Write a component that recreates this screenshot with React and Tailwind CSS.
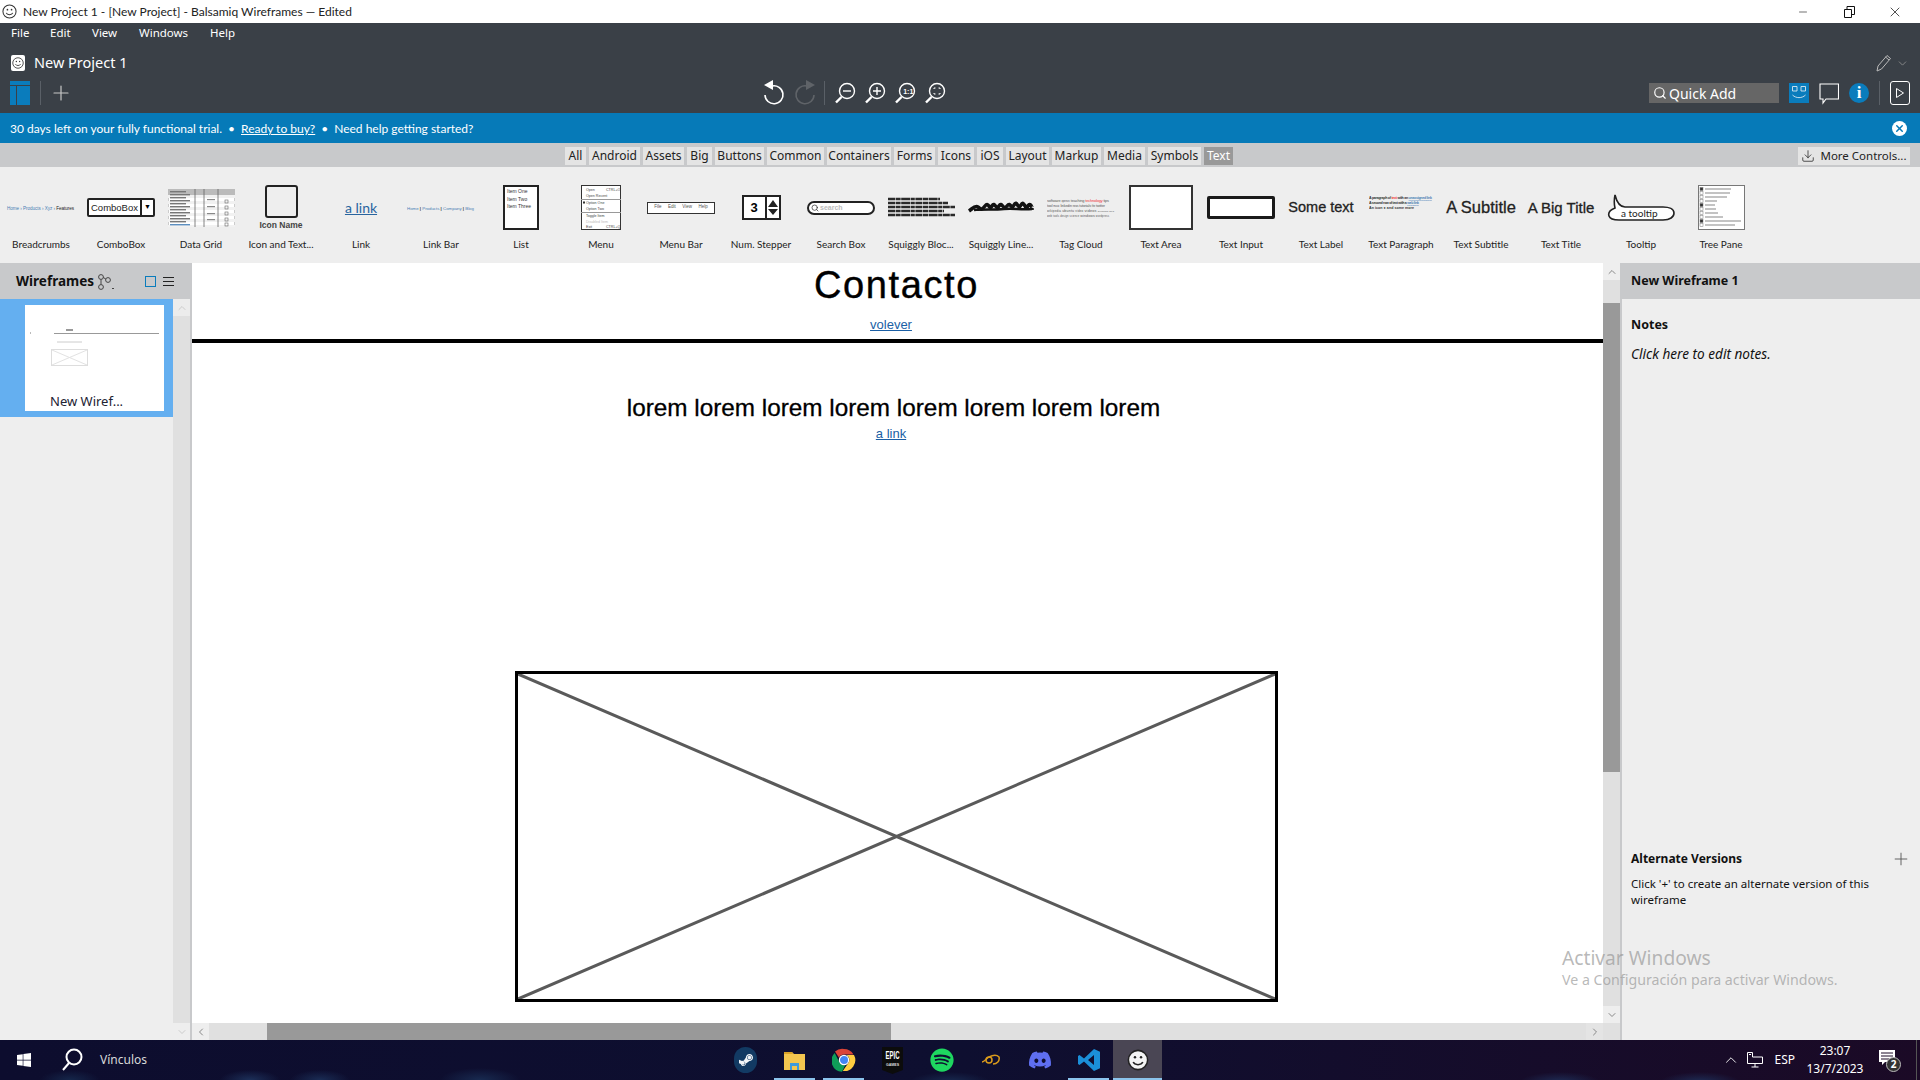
import React from 'react'
import { FaWindows, FaSpotify, FaDiscord, FaSteamSymbol } from 'react-icons/fa'
import { Search, ChevronUp, ChevronDown, ChevronLeft, ChevronRight, Plus, X, Minus, Download } from 'lucide-react'

const tabs = [
    { name: 'All', w: 'w-[21px]' },
    { name: 'Android', w: 'w-[51px]' },
    { name: 'Assets', w: 'w-[41px]' },
    { name: 'Big', w: 'w-[25px]' },
    { name: 'Buttons', w: 'w-[49px]' },
    { name: 'Common', w: 'w-[57px]' },
    { name: 'Containers', w: 'w-[64px]' },
    { name: 'Forms', w: 'w-[41px]' },
    { name: 'Icons', w: 'w-[36px]' },
    { name: 'iOS', w: 'w-[26px]' },
    { name: 'Layout', w: 'w-[43px]' },
    { name: 'Markup', w: 'w-[49px]' },
    { name: 'Media', w: 'w-[41px]' },
    { name: 'Symbols', w: 'w-[53px]' },
]

const Mini = ({ w, h, children }) => (
    <svg width={w} height={h} viewBox={`0 0 ${w} ${h}`} fontFamily="Liberation Sans, sans-serif">{children}</svg>
)

const Breadcrumbs = () => (
    <Mini w={70} h={10}>
        <text x="1" y="7" fontSize="4.6" fill="#4a7fb5" textLength="67">Home › Products › Xyz › <tspan fill="#222">Features</tspan></text>
    </Mini>
)

const ComboThumb = () => (
    <div className="w-[68px] h-[19px] border-2 border-[#222] rounded-[2px] bg-white flex items-center">
        <span className="flex-1 text-[9.5px] text-center font-['Liberation_Sans',sans-serif] text-[#222] leading-none">ComboBox</span>
        <span className="w-[13px] h-full border-l-2 border-[#222] flex items-center justify-center text-[7px] text-black">▼</span>
    </div>
)

const DataGrid = () => (
    <Mini w={67} h={38}>
        <rect x="0" y="0" width="67" height="38" fill="#fff" stroke="#999" />
        <rect x="0" y="0" width="67" height="6" fill="#bbb" />
        {[0, 6, 12, 18, 24, 30].map((y) => (
            <rect key={y} x="0" y={y + 6} width="67" height="3" fill="#f1f1f1" />
        ))}
        {[2, 5, 8, 11, 14, 17, 20, 23, 26, 29, 32].map((y) => (
            <rect key={y} x="2" y={y} width={y % 2 ? 20 : 16} height="1.4" fill="#777" />
        ))}
        <rect x="2" y="35" width="20" height="1.4" fill="#5c8fc0" />
        <path d="M27 0V38M36 0V38M50 0V38" stroke="#666" strokeWidth="0.8" />
        {[12, 18, 24, 30, 35].map((y) => (
            <rect key={y} x="57" y={y - 1} width="3" height="3" fill="none" stroke="#666" strokeWidth="0.6" />
        ))}
        {[10, 17, 24, 30].map((y) => (
            <rect key={y} x="39" y={y} width="8" height="1.2" fill="#888" />
        ))}
    </Mini>
)

const IconText = () => (
    <div className="flex flex-col items-center">
        <div className="w-[33px] h-[33px] mt-[1px] border-2 border-[#222] rounded-[3px] bg-[#eeeeee]" />
        <span className="text-[8.5px] leading-[12px] mt-[1px] font-bold text-[#444] font-['Liberation_Sans',sans-serif]">Icon Name</span>
    </div>
)

const LinkThumb = () => (
    <span className="text-[14px] leading-[16px] text-[#29649e] underline font-['Lato',sans-serif]">a link</span>
)

const LinkBar = () => (
    <Mini w={68} h={10}>
        <text x="0" y="7" fontSize="4.4" fill="#4a7fb5" textLength="67">Home <tspan fill="#333" fontWeight="bold">|</tspan> Products <tspan fill="#333" fontWeight="bold">|</tspan> Company <tspan fill="#333" fontWeight="bold">|</tspan> Blog</text>
    </Mini>
)

const ListThumb = () => (
    <div className="w-[36px] h-[45px] border-2 border-[#222] bg-white pl-[2px] pt-[1px] font-['Liberation_Sans',sans-serif] text-[5px] leading-[7.5px] text-[#333]">
        <div>Item One</div>
        <div>Item Two</div>
        <div>Item Three</div>
    </div>
)

const MenuThumb = () => (
    <Mini w={40} h={45}>
        <rect x="0.5" y="0.5" width="39" height="44" fill="#fff" stroke="#333" />
        <g fontSize="3.6" fill="#444">
            <text x="5" y="6">Open</text>
            <text x="25" y="6">CTRL+O</text>
            <text x="5" y="12">Open Recent</text>
            <text x="5" y="19">Option One</text>
            <text x="5" y="25">Option Two</text>
            <text x="5" y="32">Toggle Item</text>
            <text x="5" y="38" fill="#bbb">Disabled Item</text>
            <text x="5" y="43">Exit</text>
            <text x="25" y="43">CTRL+Q</text>
        </g>
        <path d="M0 14.5H40M0 27.5H40" stroke="#999" />
        <rect x="2" y="16.5" width="2" height="2" fill="#333" />
    </Mini>
)

const MenuBar = () => (
    <div className="w-[68px] h-[12px] border border-[#333] bg-white flex items-center justify-around px-[3px] text-[4.5px] text-[#555] font-['Liberation_Sans',sans-serif]">
        <span>File</span><span>Edit</span><span>View</span><span>Help</span>
    </div>
)

const Stepper = () => (
    <div className="w-[39px] h-[25px] border-2 border-[#222] bg-white flex items-center">
        <span className="w-[22px] text-center text-[13px] font-bold text-black font-['Liberation_Sans',sans-serif] leading-none">3</span>
        <span className="flex-1 h-full border-l-2 border-[#222] flex items-center justify-center">
            <svg width="12" height="17" viewBox="0 0 12 17"><path d="M6 1L11 8H1ZM1 10H11L6 16Z" fill="#222" /></svg>
        </span>
    </div>
)

const SearchThumb = () => (
    <div className="w-[68px] h-[14px] border-2 border-[#222] rounded-full bg-white flex items-center pl-[2px] gap-[1px]">
        <Search size={8} strokeWidth={2.2} color="#333" />
        <span className="text-[7px] leading-none text-[#bbb] font-bold font-['Liberation_Sans',sans-serif]">search</span>
    </div>
)

const SquigglyBlock = () => (
    <Mini w={67} h={21}>
        {[2, 6, 10, 14, 18].map((y, i) => (
            <path key={y} d={`M0 ${y}H${[52, 60, 67, 56, 67][i]}`} stroke="#2a2a2a" strokeWidth="2.4" strokeDasharray="7 0.6 5 0.6 9 0.6 4 0.6" />
        ))}
    </Mini>
)

const SquigglyLine = () => (
    <Mini w={66} h={14}>
        <path d="M1 10C4 8 7 4 10 6S13 10 17 5 21 10 24 5 28 10 31 5 35 10 39 5 43 10 46 4 50 10 53 4 57 10 60 5 64 9 65 7" fill="none" stroke="#111" strokeWidth="3.6" />
        <path d="M6 9C16 8 26 9 36 8S52 9 64 8" fill="none" stroke="#111" strokeWidth="2.4" />
    </Mini>
)

const TagCloud = () => (
    <Mini w={68} h={20}>
        <g fill="#555">
            <text x="0" y="4" fontSize="3.8" textLength="62">software <tspan fontSize="2.6">opensrc</tspan> teaching <tspan fill="#e33">technology</tspan> tips</text>
            <text x="0" y="9" fontSize="3.6" textLength="58">tool <tspan fontSize="2.6">music</tspan> linkedin <tspan fontSize="2.6">news</tspan> tutorials <tspan fontSize="2.6">the</tspan> twitter</text>
            <text x="0" y="14" fontSize="3" textLength="67">wikipedia <tspan fontSize="3.6">ubuntu</tspan> video <tspan fontSize="3.8">videos</tspan> <tspan fontSize="2.4">windows web</tspan></text>
            <text x="0" y="19" fontSize="2.6" textLength="62">web tools design science <tspan fontSize="3.6">windows</tspan> wordpress</text>
        </g>
    </Mini>
)

const TextArea = () => <div className="w-[64px] h-[45px] border-2 border-[#333] bg-white" />

const TextInput = () => <div className="w-[68px] h-[23px] border-[3px] border-[#1a1a1a] rounded-[2px] bg-white" />

const SomeText = () => (
    <span className="text-[14.5px] leading-none text-[#222] whitespace-nowrap [-webkit-text-stroke:0.3px_#222] font-['Liberation_Sans',sans-serif]">Some text</span>
)

const Paragraph = () => (
    <div className="-mt-[9px] flex">
        <Mini w={64} h={16}>
            <g fontSize="3.6" fill="#333" fontWeight="bold">
                <text x="0" y="4" textLength="63">A paragraph of <tspan fill="#e33">text</tspan> with an <tspan fill="#4a7fb5" textDecoration="underline">unassigned link</tspan></text>
                <text x="0" y="9" textLength="50">A second row of text with a <tspan fill="#4a7fb5" textDecoration="underline">web link</tspan></text>
                <text x="0" y="14" textLength="45">An icon ● and some more</text>
            </g>
        </Mini>
    </div>
)

const Subtitle = () => (
    <span className="text-[16.5px] leading-none text-[#222] whitespace-nowrap [-webkit-text-stroke:0.3px_#222] font-['Liberation_Sans',sans-serif]">A Subtitle</span>
)

const BigTitle = () => (
    <span className="text-[15px] leading-none text-[#222] whitespace-nowrap [-webkit-text-stroke:0.3px_#222] font-['Liberation_Sans',sans-serif]">A Big Title</span>
)

const TooltipThumb = () => (
    <Mini w={68} h={27}>
        <path d="M8 14C3 16 1 19 2 22 3 25 7 26 12 26H56C63 26 67 23 67 19 67 15 62 13 56 13H18C14 13 10 9 8 1 7 6 7 10 8 14Z" fill="#fff" stroke="#222" strokeWidth="1.6" />
        <text x="14" y="22.5" fontSize="10" fill="#222" fontFamily="Lato, sans-serif">a tooltip</text>
    </Mini>
)

const TreePane = () => (
    <Mini w={47} h={45}>
        <rect x="0.5" y="0.5" width="46" height="44" fill="#fff" stroke="#777" />
        {[4, 8, 12, 16, 20, 24, 28, 32, 36, 40].map((y, i) => (
            <g key={y}>
                <rect x="2" y={y - 1.5} width="3" height="3" fill={i % 4 === 0 ? '#333' : 'none'} stroke="#777" strokeWidth="0.5" />
                <rect x="7" y={y - 0.5} width={[26, 25, 22, 12, 10, 11, 13, 18, 36, 30][i]} height="1" fill="#888" />
            </g>
        ))}
    </Mini>
)

const library = [
    { label: 'Breadcrumbs', thumb: <Breadcrumbs /> },
    { label: 'ComboBox', thumb: <ComboThumb /> },
    { label: 'Data Grid', thumb: <DataGrid /> },
    { label: 'Icon and Text...', thumb: <IconText /> },
    { label: 'Link', thumb: <LinkThumb /> },
    { label: 'Link Bar', thumb: <LinkBar /> },
    { label: 'List', thumb: <ListThumb /> },
    { label: 'Menu', thumb: <MenuThumb /> },
    { label: 'Menu Bar', thumb: <MenuBar /> },
    { label: 'Num. Stepper', thumb: <Stepper /> },
    { label: 'Search Box', thumb: <SearchThumb /> },
    { label: 'Squiggly Bloc...', thumb: <SquigglyBlock /> },
    { label: 'Squiggly Line...', thumb: <SquigglyLine /> },
    { label: 'Tag Cloud', thumb: <TagCloud /> },
    { label: 'Text Area', thumb: <TextArea /> },
    { label: 'Text Input', thumb: <TextInput /> },
    { label: 'Text Label', thumb: <SomeText /> },
    { label: 'Text Paragraph', thumb: <Paragraph /> },
    { label: 'Text Subtitle', thumb: <Subtitle /> },
    { label: 'Text Title', thumb: <BigTitle /> },
    { label: 'Tooltip', thumb: <TooltipThumb /> },
    { label: 'Tree Pane', thumb: <TreePane /> },
]

const Smiley = ({ size = 16, stroke = '#333', fill = 'none' }) => (
    <svg width={size} height={size} viewBox="0 0 16 16" fill="none">
        <circle cx="8" cy="8" r="7" stroke={stroke} strokeWidth="1.1" fill={fill} />
        <circle cx="5.8" cy="6" r="0.9" fill={stroke} />
        <circle cx="10.2" cy="6" r="0.9" fill={stroke} />
        <path d="M4.5 9.5C5.5 12 10.5 12 11.5 9.5" stroke={stroke} strokeWidth="1.1" />
    </svg>
)

const Zoom = ({ children }) => (
    <svg width="22" height="22" viewBox="0 0 22 22" fill="none" stroke="#fff" strokeWidth="1.4">
        <circle cx="13" cy="9" r="7.5" />
        <path d="M7.5 15L2 20.5" strokeWidth="2.4" />
        {children}
    </svg>
)

const ChromeIcon = () => (
    <svg width="24" height="24" viewBox="0 0 24 24">
        <path d="M12 1a11 11 0 0 1 9.5 5.5H12a5.5 5.5 0 0 0-5 3.2L3 3.6A11 11 0 0 1 12 1Z" fill="#db4437" />
        <path d="M2.7 5L7.3 14a5.5 5.5 0 0 0 6 3l-3.3 6.8A11 11 0 0 1 2.7 5Z" fill="#0f9d58" />
        <path d="M22 7H14.5a5.5 5.5 0 0 1 1.8 8L10.8 23A11 11 0 0 0 22 7Z" fill="#ffcd40" />
        <circle cx="12" cy="12" r="4.6" fill="#4285f4" stroke="#fff" strokeWidth="1.2" />
    </svg>
)

const FolderIcon = () => (
    <svg width="23" height="23" viewBox="0 0 23 23">
        <path d="M1 3H9L11 5H22V21H1Z" fill="#f3c64f" />
        <path d="M1 3H9L10 5H1Z" fill="#d9a227" />
        <path d="M7 14H16V21H14V17H9V21H7Z" fill="#3f9bdc" />
    </svg>
)

const VscodeIcon = () => (
    <svg width="24" height="24" viewBox="0 0 24 24">
        <path d="M17 1L23 3.8V20.2L17 23L7 13.5L2.5 17L1 16V8L2.5 7L7 10.5ZM17 7L11 12L17 17Z" fill="#1b8fd8" />
    </svg>
)

const HornIcon = () => (
    <svg width="20" height="12" viewBox="0 0 20 12" fill="none" stroke="#d99a1c" strokeWidth="1.5">
        <circle cx="8" cy="6" r="3" />
        <path d="M1 8C3 8 5 5 8 3 12 1 16 1 18 3 19 7 16 10 12 10" />
    </svg>
)

const EpicIcon = () => (
    <svg width="21" height="29" viewBox="0 0 21 29">
        <path d="M0 1H21V24L10.5 28L0 24Z" fill="#0c0c0c" />
        <text transform="translate(10.5 13) scale(1 1.7)" fontSize="6" fontWeight="bold" fill="#fff" textAnchor="middle" fontFamily="Liberation Sans, sans-serif">EPIC</text>
        <text x="10.5" y="20" fontSize="3.6" fontWeight="bold" fill="#ddd" textAnchor="middle" fontFamily="Liberation Sans, sans-serif">GAMES</text>
    </svg>
)

const SteamIcon = () => (
    <span className="w-[23px] h-[26px] rounded-full bg-[#123a63] flex items-center justify-center">
        <FaSteamSymbol size={16} color="#f2f5f8" />
    </span>
)

const taskIcons = [
    { el: <SteamIcon />, bar: null },
    { el: <FolderIcon />, bar: 'one' },
    { el: <ChromeIcon />, bar: 'one' },
    { el: <EpicIcon />, bar: null },
    { el: <FaSpotify size={24} color="#1ed760" />, bar: null },
    { el: <HornIcon />, bar: null },
    { el: <FaDiscord size={24} color="#5f6ff0" />, bar: null },
    { el: <VscodeIcon />, bar: 'one' },
    { el: <Smiley size={22} stroke="#222" fill="#f4f4f4" />, bar: 'active' },
]

export default function App() {
    return (
        <div className="relative w-[1920px] h-[1080px] flex flex-col overflow-hidden bg-white font-['Noto_Sans',sans-serif]">
            {/* title bar */}
            <div className="h-[23px] flex items-center bg-white shrink-0">
                <span className="ml-[2px] mr-[6px] flex"><Smiley size={15} /></span>
                <span className="text-[12px] text-[#222] font-['Lato',sans-serif]">New Project 1 - [New Project] - Balsamiq Wireframes — Edited</span>
                <div className="ml-auto mr-[2px] flex items-center">
                    <span className="w-[46px] flex justify-center"><Minus size={12} strokeWidth={1.2} color="#111" /></span>
                    <span className="w-[46px] flex justify-center">
                        <svg width="11" height="12" viewBox="0 0 11 12" fill="none" stroke="#111"><path d="M0.5 3.5H7.5V11.5H0.5ZM3 3V0.5H10.5V8.5H8" /></svg>
                    </span>
                    <span className="w-[46px] flex justify-center"><X size={16} strokeWidth={1.1} color="#111" /></span>
                </div>
            </div>

            {/* dark app header */}
            <div className="h-[90px] bg-[#3a4047] shrink-0 flex flex-col text-white">
                <div className="h-[20px] flex items-center pl-[11px] text-[11.5px]">
                    <span className="w-[39px]">File</span>
                    <span className="w-[42px]">Edit</span>
                    <span className="w-[47px]">View</span>
                    <span className="w-[71px]">Windows</span>
                    <span>Help</span>
                </div>
                <div className="h-[40px] flex items-center pl-[11px] pr-[11px]">
                    <span className="mr-[9px] w-[14px] h-[16px] bg-white rounded-[2px] flex items-center justify-center"><Smiley size={12} /></span>
                    <span className="text-[14.5px]">New Project 1</span>
                    <span className="ml-auto flex items-center gap-[4px]">
                        <svg width="16" height="18" viewBox="0 0 16 18" fill="none" stroke="#bbb"><path d="M1 17L2 12L11 1.5L14.5 4.5L5.5 15ZM9.5 3L13 6" /></svg>
                        <ChevronDown size={13} color="#999" strokeWidth={1.4} />
                    </span>
                </div>
                <div className="h-[20px] flex items-center pl-[10px] pr-[10px]">
                    <svg width="20" height="24" viewBox="0 0 20 24"><path d="M0 0H20V4H0ZM0 5H6V24H0ZM7 5H20V24H7Z" fill="#0a7cbc" /></svg>
                    <span className="w-px h-[24px] bg-[#5a6067] ml-[10px]" />
                    <span className="ml-[8px]"><Plus size={24} strokeWidth={1.2} color="#c8c8c8" /></span>
                    <div className="ml-[690px] flex items-center">
                        <svg width="22" height="26" viewBox="0 0 22 26" fill="none" stroke="#fff" strokeWidth="1.6"><path d="M9 6A9 9 0 1 1 2 15" /><path d="M1 5L10 0V10Z" fill="#fff" stroke="none" /></svg>
                        <svg className="ml-[9px]" width="22" height="26" viewBox="0 0 22 26" fill="none" stroke="#5f6368" strokeWidth="1.6"><path d="M13 6A9 9 0 1 0 20 15" /><path d="M21 5L12 0V10Z" fill="#5f6368" stroke="none" /></svg>
                        <span className="w-px h-[24px] bg-[#5a6067] ml-[8px] mr-[9px]" />
                        <Zoom><path d="M9 9H17" /></Zoom>
                        <span className="ml-[8px] flex"><Zoom><path d="M9 9H17M13 5V13" /></Zoom></span>
                        <span className="ml-[8px] flex"><Zoom><text x="9.2" y="11.5" fontSize="7" fill="#fff" stroke="none" fontWeight="bold" fontFamily="Liberation Sans, sans-serif">1:1</text></Zoom></span>
                        <span className="ml-[8px] flex"><Zoom><path d="M10 7V6H11.5M14.5 6H16V7M16 11V12H14.5M11.5 12H10V11" strokeWidth="1" /></Zoom></span>
                    </div>
                    <div className="ml-auto flex items-center">
                        <div className="w-[130px] h-[20px] bg-[#666666] flex items-center pl-[4px] gap-[2px] text-[14px]">
                            <Search size={14} strokeWidth={2} color="#fff" />
                            <span>Quick Add</span>
                        </div>
                        <span className="ml-[10px] w-[20px] h-[20px] bg-[#0a7cbc] flex items-center justify-center">
                            <svg width="16" height="16" viewBox="0 0 16 16" fill="none" stroke="#d8e8f0" strokeWidth="0.9"><path d="M1.5 1.5H6V6H1.5ZM10 1.5H14.5V6H10ZM1.5 10C5 13.5 11 13.5 14.5 10" /></svg>
                        </span>
                        <span className="ml-[10px] flex">
                            <svg width="20" height="24" viewBox="0 0 20 24" fill="none" stroke="#fff" strokeWidth="1.1"><path d="M1 3H19.5V18H7L4 22V18H1Z" /></svg>
                        </span>
                        <span className="ml-[10px] w-[20px] h-[20px] rounded-full bg-[#0a7cbc] flex items-center justify-center text-[17px] font-bold text-white font-['Liberation_Serif',serif]">i</span>
                        <span className="w-px h-[24px] bg-[#5a6067] ml-[10px] mr-[10px]" />
                        <span className="w-[20px] h-[24px] border border-white rounded-[3px] flex items-center justify-center">
                            <svg width="10" height="12" viewBox="0 0 10 12" fill="none" stroke="#fff"><path d="M1.5 1.5L8.5 6L1.5 10.5Z" /></svg>
                        </span>
                    </div>
                </div>
            </div>

            {/* trial notice */}
            <div className="h-[30px] bg-[#067ab8] shrink-0 flex items-center pt-[1px] pl-[10px] pr-[13px] text-white text-[12px] font-['Lato',sans-serif]">
                <span>30 days left on your fully functional trial.</span>
                <span className="mx-[6px]">•</span>
                <span className="underline">Ready to buy?</span>
                <span className="mx-[6px]">•</span>
                <span>Need help getting started?</span>
                <span className="ml-auto w-[15px] h-[15px] rounded-full bg-white flex items-center justify-center">
                    <X size={11} strokeWidth={3.2} color="#067ab8" />
                </span>
            </div>

            {/* category tabs */}
            <div className="h-[24px] bg-[#c8c9cb] shrink-0 flex items-center pt-[1px] text-[12px] text-[#222]">
                <div className="w-[1798px] flex justify-center gap-[3px]">
                    {tabs.map((t) => (
                        <span key={t.name} className={t.w + ' h-[18px] bg-[#e4e4e4] flex items-center justify-center whitespace-nowrap'}>{t.name}</span>
                    ))}
                    <span className="w-[29px] h-[18px] bg-[#999999] text-white flex items-center justify-center">Text</span>
                </div>
                <div className="w-[112px] h-[18px] bg-[#e4e4e4] text-[11.5px] flex items-center justify-center gap-[5px] whitespace-nowrap">
                    <Download size={14} strokeWidth={1.3} color="#222" />
                    <span>More Controls...</span>
                </div>
            </div>

            {/* library strip */}
            <div className="h-[96px] bg-[#eeeeee] shrink-0 flex pl-[1px]">
                {library.map((item) => (
                    <div key={item.label} className="w-[80px] shrink-0 flex flex-col items-center pt-[18px]">
                        <div className="h-[45px] flex items-center justify-center">{item.thumb}</div>
                        <div className="mt-[6px] text-[10px] leading-[16px] text-[#222] whitespace-nowrap font-['Lato',sans-serif]">{item.label}</div>
                    </div>
                ))}
            </div>

            {/* main */}
            <div className="flex-1 min-h-0 flex">
                {/* wireframes panel */}
                <div className="w-[192px] shrink-0 flex flex-col bg-[#eeeeee] border-r-2 border-[#c8c9cb]">
                    <div className="h-[36px] shrink-0 bg-[#c8c9cb] flex items-center pl-[16px] pt-[1px] text-[13.5px] font-bold text-[#111]">
                        <span>Wireframes</span>
                        <svg className="ml-[3px]" width="18" height="16" viewBox="0 0 18 16" fill="none" stroke="#444"><circle cx="4" cy="3" r="2.4" /><circle cx="11" cy="6" r="2.4" /><circle cx="4" cy="13" r="2.4" /><path d="M4 5.5V10.5M6.3 3.5L8.8 5M15 14L16 15L17 14" /></svg>
                        <span className="ml-[30px] w-[11px] h-[11px] border border-[#0a7cbc]" />
                        <span className="ml-[7px] flex flex-col gap-[3px]">
                            <span className="block w-[11px] h-px bg-[#222]" />
                            <span className="block w-[11px] h-px bg-[#222]" />
                            <span className="block w-[11px] h-px bg-[#222]" />
                        </span>
                    </div>
                    <div className="flex-1 min-h-0 flex">
                        <div className="w-[173px] shrink-0">
                            <div className="h-[118px] bg-[#64aff0] pl-[25px] pt-[6px]">
                                <div className="w-[139px] h-[106px] bg-white flex flex-col">
                                    <svg width="139" height="84" viewBox="0 0 139 84" fill="none">
                                        <path d="M5 28H6" stroke="#777" />
                                        <path d="M29 28.5H134" stroke="#999" />
                                        <path d="M41 25H48" stroke="#555" strokeWidth="1.2" />
                                        <path d="M32 37H57" stroke="#ccc" />
                                        <rect x="26.5" y="44.5" width="36" height="16" stroke="#ddd" />
                                        <path d="M27 45L62 60M62 45L27 60" stroke="#e2e2e2" />
                                    </svg>
                                    <span className="pl-[25px] mt-[4px] text-[13px] leading-[16px] text-[#223]">New Wiref...</span>
                                </div>
                            </div>
                        </div>
                        <div className="w-[17px] shrink-0 bg-[#e0e0e0] flex flex-col justify-between">
                            <span className="h-[17px] bg-[#ececec] flex items-center justify-center"><ChevronUp size={12} color="#ccc" /></span>
                            <span className="h-[17px] bg-[#eeeeee] flex items-center justify-center"><ChevronDown size={12} color="#ccc" /></span>
                        </div>
                    </div>
                </div>

                {/* canvas column */}
                <div className="w-[1411px] shrink-0 flex flex-col">
                    <div className="flex-1 min-h-0 bg-white flex flex-col items-center font-['Liberation_Sans',sans-serif]">
                        <div className="h-[39px] mt-[2px] text-[38px] leading-[40px] text-black tracking-[1.6px] [-webkit-text-stroke:0.4px_black] -ml-[2px]">Contacto</div>
                        <a className="mt-[13px] text-[13px] leading-[16px] text-[#1b5fa5] underline -ml-[13px]">volever</a>
                        <div className="w-full h-[4px] bg-black mt-[6px] shrink-0" />
                        <div className="mt-[50px] text-[24.3px] leading-[30px] text-black whitespace-nowrap [-webkit-text-stroke:0.3px_black] -ml-[8px]">lorem lorem lorem lorem lorem lorem lorem lorem</div>
                        <a className="mt-[3px] text-[13px] leading-[16px] text-[#1b5fa5] underline -ml-[13px]">a link</a>
                        <div className="mt-[229px] w-[763px] h-[331px] shrink-0 border-[3px] border-black -ml-[2px]">
                            <svg className="w-full h-full" viewBox="0 0 757 325" preserveAspectRatio="none" fill="none">
                                <path d="M0 0L757 325M757 0L0 325" stroke="#5a5a5a" strokeWidth="3" />
                            </svg>
                        </div>
                    </div>
                    <div className="h-[17px] shrink-0 bg-[#e0e0e0] flex items-center">
                        <span className="w-[17px] h-full bg-[#eeeeee] flex items-center justify-center"><ChevronLeft size={12} color="#888" /></span>
                        <span className="ml-[58px] w-[624px] h-full bg-[#999999]" />
                        <span className="ml-auto w-[17px] h-full bg-[#e4e4e4] flex items-center justify-center"><ChevronRight size={12} color="#888" /></span>
                    </div>
                </div>

                {/* canvas vertical scrollbar */}
                <div className="w-[17px] shrink-0 bg-[#e0e0e0] flex flex-col">
                    <span className="h-[17px] shrink-0 bg-[#eeeeee] flex items-center justify-center"><ChevronUp size={12} color="#888" /></span>
                    <span className="mt-[23px] h-[469px] shrink-0 bg-[#999999]" />
                    <span className="mt-auto h-[17px] shrink-0 bg-[#eeeeee] flex items-center justify-center"><ChevronDown size={12} color="#888" /></span>
                    <span className="h-[17px] shrink-0 bg-[#e0e0e0]" />
                </div>

                {/* properties panel */}
                <div className="flex-1 min-w-0 flex flex-col bg-[#eeeeee] border-l-2 border-[#c8c9cb] text-[#111]">
                    <div className="h-[36px] shrink-0 bg-[#c8c9cb] flex items-center pl-[9px] text-[12.5px] font-bold">New Wireframe 1</div>
                    <div className="pl-[9px] mt-[17px] text-[12.5px] leading-[18px] font-bold">Notes</div>
                    <div className="pl-[9px] mt-[11px] text-[13.6px] leading-[18px] italic">Click here to edit notes.</div>
                    <div className="mt-[486px] pl-[9px] pr-[9px] flex items-center justify-between text-[12px] leading-[18px] font-bold">
                        <span>Alternate Versions</span>
                        <Plus size={20} strokeWidth={1.1} color="#555" />
                    </div>
                    <div className="pl-[9px] pr-[30px] mt-[7px] text-[11.5px] leading-[16px]">Click '+' to create an alternate version of this wireframe</div>
                </div>
            </div>

            {/* taskbar */}
            <div className="h-[40px] shrink-0 flex items-center text-white bg-[radial-gradient(ellipse_30px_10px_at_250px_40px,#1c2f58,transparent),radial-gradient(ellipse_30px_10px_at_320px_40px,#1a2c54,transparent),radial-gradient(ellipse_30px_10px_at_70px_40px,#15264a,transparent),radial-gradient(ellipse_40px_12px_at_480px_40px,#182a50,transparent),radial-gradient(ellipse_40px_10px_at_950px_42px,#182a50,transparent),radial-gradient(ellipse_40px_10px_at_1560px_42px,#1e2c55,transparent),radial-gradient(ellipse_40px_10px_at_1700px_42px,#1e2c55,transparent),linear-gradient(90deg,#0d0d2e,#0e0f30_50%,#1b0a26)]">
                <span className="w-[48px] flex justify-center"><FaWindows size={16} color="#fff" /></span>
                <span className="w-[48px] flex justify-center">
                    <svg width="22" height="24" viewBox="0 0 22 24" fill="none" stroke="#fff" strokeWidth="2"><circle cx="13" cy="9" r="7.5" /><path d="M8 15L2 22" /></svg>
                </span>
                <span className="ml-[4px] w-[621px] text-[12px] text-[#d8d8d8]">Vínculos</span>
                {taskIcons.map((t, i) => (
                    <span key={i} className={(t.bar === 'active' ? 'bg-[#4a4654] ' : '') + 'relative w-[49px] h-full flex items-center justify-center'}>
                        {t.el}
                        {t.bar === 'one' && <span className="absolute bottom-0 left-[4px] right-[4px] h-[2px] bg-[#8cc4ec]" />}
                        {t.bar === 'active' && <span className="absolute bottom-0 left-0 right-0 h-[2px] bg-[#8cc4ec]" />}
                    </span>
                ))}
                <div className="ml-auto flex items-center">
                    <ChevronUp size={18} strokeWidth={1.2} color="#fff" />
                    <span className="ml-[7px] flex">
                        <svg width="16" height="16" viewBox="0 0 16 16" fill="none" stroke="#fff"><path d="M0.5 0.5H5.5V5H15.5V11.5H0.5ZM8 12V15M4.5 15H11.5M2 2.5H4" /></svg>
                    </span>
                    <span className="ml-[11px] text-[12px]">ESP</span>
                    <span className="ml-[4px] w-[72px] flex flex-col items-center text-[12px] leading-[18px]">
                        <span>23:07</span>
                        <span>13/7/2023</span>
                    </span>
                    <span className="relative ml-[8px] mr-[21px] w-[16px] h-[20px] flex">
                        <svg width="16" height="16" viewBox="0 0 16 16" fill="#fff"><path d="M0 0H16V12H6L3 15V12H0Z" /><path d="M2 3H14M2 6H14M2 9H10" stroke="#1b0a26" /></svg>
                        <span className="absolute left-[7px] top-[7px] w-[15px] h-[15px] rounded-full bg-[#333] border border-[#bbb] flex items-center justify-center text-[10px] font-bold">2</span>
                    </span>
                    <span className="w-px h-[40px] bg-[#555] mr-[3px]" />
                </div>
            </div>

            {/* windows activation watermark, sits over everything */}
            <div className="absolute left-[1562px] top-[944px] pointer-events-none text-[#9a9a9a]/70">
                <div className="text-[19.2px] leading-[28px]">Activar Windows</div>
                <div className="text-[14.2px] leading-[20px] -mt-[2px]">Ve a Configuración para activar Windows.</div>
            </div>
        </div>
    )
}
